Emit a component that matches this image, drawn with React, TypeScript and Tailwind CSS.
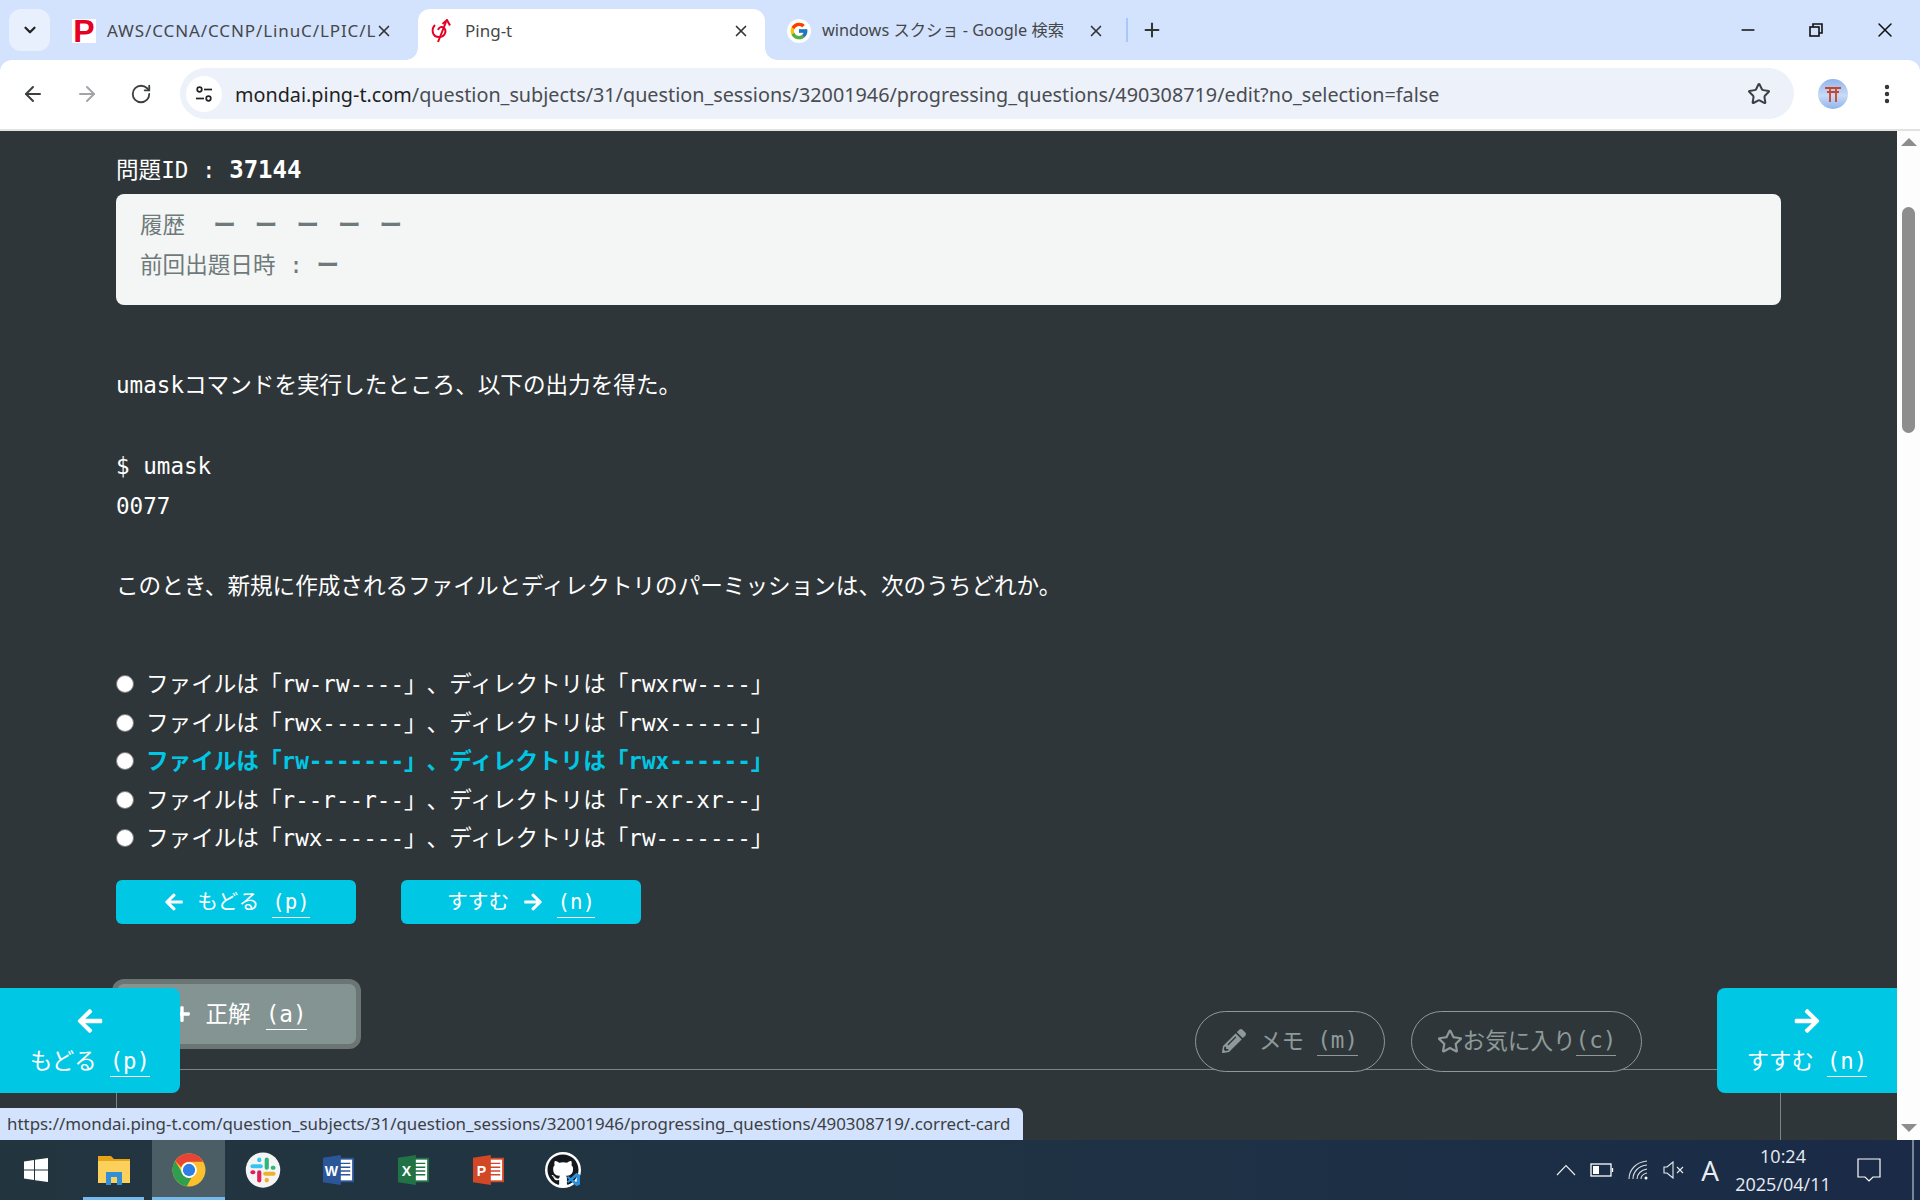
import * as React from 'react';
import { ArrowLeft, ArrowRight, RotateCw, Star, MoreVertical, Plus, X, ChevronDown, Minus } from 'lucide-react';
import { FaArrowLeft, FaArrowRight, FaPencilAlt, FaRegStar, FaPlus, FaGithub } from 'react-icons/fa';
import { FcGoogle } from 'react-icons/fc';
import { VscVscode } from 'react-icons/vsc';

const mono = { fontFamily: '"DejaVu Sans Mono", "Noto Sans CJK JP", monospace' };

const options = [
    { file: 'rw-rw----', dir: 'rwxrw----', correct: false },
    { file: 'rwx------', dir: 'rwx------', correct: false },
    { file: 'rw-------', dir: 'rwx------', correct: true },
    { file: 'r--r--r--', dir: 'r-xr-xr--', correct: false },
    { file: 'rwx------', dir: 'rw-------', correct: false },
];

const Key: React.FC<{ children: React.ReactNode; className?: string }> = ({ children, className = 'border-white' }) => (
    <span className={`border-b leading-[30px] inline-block ${className}`}>{children}</span>
);

const Tab: React.FC<{ icon: React.ReactNode; title: string; active?: boolean; width: string; titleClass: string; xPos: string }> = ({ icon, title, active, width, titleClass, xPos }) => (
    <div className={`relative h-[51px] flex items-center shrink-0 pb-[8px] ${width} ${active ? 'bg-white rounded-t-xl' : ''}`}>
        {active && <span className="absolute -left-3 bottom-0 w-3 h-3 bg-[radial-gradient(circle_at_0_0,#d3e3fd_11.5px,#ffffff_12px)]" />}
        {active && <span className="absolute -right-3 bottom-0 w-3 h-3 bg-[radial-gradient(circle_at_100%_0,#d3e3fd_11.5px,#ffffff_12px)]" />}
        <span className="ml-3 w-6 h-6 shrink-0 flex items-center justify-center">{icon}</span>
        <span className={`ml-[11px] whitespace-nowrap text-[#45474a] ${titleClass}`}>{title}</span>
        <X className={`absolute top-[13px] w-[18px] h-[18px] text-[#333] ${xPos}`} strokeWidth={2.2} />
    </div>
);

const PingIcon = () => (
    <svg viewBox="0 0 24 24" className="w-6 h-6" fill="none" stroke="#e60023" strokeWidth="2">
        <path d="M5 6C1 10 2 18 9 18C15 18 17 12 14 9C12 7 9 8 8 11" />
        <path d="M8 23L16 3" />
        <path d="M12.5 5L17 1L20 6.5" />
    </svg>
);

const ChromeIcon = () => (
    <svg viewBox="0 0 48 48" className="w-[36px] h-[36px]">
        <circle cx="24" cy="24" r="22" fill="#fbc02d" />
        <path d="M5.6 12L15 28a11 11 0 0 0 12 6.6L21 45.8A22 22 0 0 1 5.6 12z" fill="#2e9e4f" />
        <path d="M24 2a22 22 0 0 1 19.05 11H24a11 11 0 0 0-10.4 7.4L5.6 12A22 22 0 0 1 24 2z" fill="#e94335" />
        <circle cx="24" cy="24" r="10.5" fill="#fff" />
        <circle cx="24" cy="24" r="8.2" fill="#2d7ee6" />
    </svg>
);

const SlackIcon = () => (
    <svg viewBox="0 0 48 48" className="w-[36px] h-[38px]">
        <ellipse cx="24" cy="24" rx="23" ry="23.5" fill="#f4f4f4" />
        <g strokeWidth="5.5" strokeLinecap="round" fill="none">
            <path d="M29 10V21M29 21H29" stroke="#2eb67d" />
            <path d="M38 21H37" stroke="#2eb67d" />
            <path d="M27 29H38" stroke="#ecb22e" />
            <path d="M29 38V37" stroke="#ecb22e" />
            <path d="M19 27V38" stroke="#e01e5a" />
            <path d="M10 27H11" stroke="#e01e5a" />
            <path d="M10 19H21" stroke="#36c5f0" />
            <path d="M19 10V11" stroke="#36c5f0" />
        </g>
    </svg>
);

const OfficeIcon: React.FC<{ color: string; letter: string }> = ({ color, letter }) => (
    <svg viewBox="0 0 34 34" className="w-[32px] h-[32px]">
        <rect x="14" y="5" width="19" height="24" fill="#fff" stroke={color} strokeWidth="2" />
        <path d="M19 10H30M19 14H30M19 18H30M19 22H30" stroke={color} strokeWidth="1.5" />
        <path d="M1 4L20 1V33L1 30Z" fill={color} />
        <text x="10" y="23" textAnchor="middle" fontSize="15" fontWeight="700" fill="#fff" fontFamily="Liberation Sans, sans-serif">{letter}</text>
    </svg>
);

const TaskCell: React.FC<{ children: React.ReactNode; width: string; active?: boolean; open?: boolean }> = ({ children, width, active, open }) => (
    <div className={`relative h-full flex items-center justify-center ${width} ${active ? 'bg-[#4b5e66]' : ''}`}>
        {children}
        {open && <span className={`absolute bottom-0 h-[3px] bg-[#76b9ed] ${active ? 'inset-x-0' : 'inset-x-2'}`} />}
    </div>
);

const App: React.FC = () => {
    return (
        <div className="relative w-[1920px] h-[1200px] overflow-hidden flex flex-col bg-[#d3e3fd] [text-spacing-trim:space-all]" style={{ fontFamily: '"Noto Sans", "Noto Sans CJK JP", sans-serif' }}>
            {/* tab strip */}
            <div className="h-[60px] shrink-0 flex items-end pl-[9px]">
                <div className="self-start mt-[9px] w-[41px] h-[42px] rounded-xl bg-[#e9f0fd] flex items-center justify-center">
                    <ChevronDown className="w-[18px] h-[18px] text-[#222]" strokeWidth={3} />
                </div>
                <div className="ml-[10px] flex items-end">
                    <Tab
                        width="w-[358px]"
                        titleClass="text-[17px] tracking-[0.9px]"
                        xPos="right-[25px]"
                        title="AWS/CCNA/CCNP/LinuC/LPIC/L"
                        icon={<span className="w-6 h-6 bg-white flex items-center justify-center text-[#e60023] text-[32px] font-bold leading-none" style={{ fontFamily: '"Liberation Sans", sans-serif' }}>P</span>}
                    />
                    <Tab width="w-[347px]" titleClass="text-[17px]" xPos="right-[15px]" active title="Ping-t" icon={<PingIcon />} />
                    <div className="w-[10px]" />
                    <Tab
                        width="w-[353px]"
                        titleClass="text-[16.3px]"
                        xPos="right-[23px]"
                        title="windows スクショ - Google 検索"
                        icon={<span className="w-6 h-6 bg-white rounded-full flex items-center justify-center"><FcGoogle className="w-5 h-5" /></span>}
                    />
                </div>
                <span className="self-start mt-[18px] -ml-[2px] w-[2px] h-6 bg-[#a8c7fa]" />
                <Plus className="self-start mt-[19px] ml-[13px] w-[22px] h-[22px] text-[#333]" strokeWidth={2.2} />
                <div className="ml-auto self-start flex items-center h-[60px]">
                    <Minus className="w-5 h-5 text-[#111] mr-[50px]" strokeWidth={2} />
                    <svg viewBox="0 0 16 16" className="w-4 h-4 mr-[49px]" fill="none" stroke="#111" strokeWidth="1.6">
                        <rect x="2" y="5" width="9" height="9" />
                        <path d="M5 5V2H14V11H11" />
                    </svg>
                    <X className="w-6 h-6 text-[#111] mr-[23px]" strokeWidth={1.5} />
                </div>
            </div>

            {/* toolbar */}
            <div className="h-[71px] shrink-0 bg-white rounded-t-xl border-b-2 border-[#e2e2e2] flex items-center pb-[2px] pl-[21px]">
                <ArrowLeft className="w-6 h-6 text-[#3c4043]" strokeWidth={2} />
                <ArrowRight className="ml-[30px] w-6 h-6 text-[#a2a4a7]" strokeWidth={2} />
                <RotateCw className="ml-[31px] w-[22px] h-[22px] text-[#3c4043]" strokeWidth={2} />
                <div className="ml-[28px] w-[1614px] h-[51px] rounded-full bg-[#ecf1fa] flex items-center pl-[6px]">
                    <div className="w-9 h-9 rounded-full bg-white flex items-center justify-center shrink-0">
                        <svg viewBox="0 0 20 20" className="w-5 h-5" fill="none" stroke="#222" strokeWidth="1.7">
                            <circle cx="5.5" cy="5.5" r="2.3" />
                            <path d="M10 5.5H18" />
                            <circle cx="14.5" cy="14.5" r="2.3" />
                            <path d="M2 14.5H10" />
                        </svg>
                    </div>
                    <div className="ml-[13px] pt-[2px] text-[19.8px] whitespace-nowrap text-[#4a4c50]">
                        <span className="text-[#1f1f1f]">mondai.ping-t.com</span>/question_subjects/31/question_sessions/32001946/progressing_questions/490308719/edit?no_selection=false
                    </div>
                    <Star className="ml-auto mr-[23px] w-6 h-6 text-[#3c4043]" strokeWidth={2} />
                </div>
                <div className="ml-6 w-[30px] h-[30px] rounded-full bg-[linear-gradient(#8fb5ec,#c9daf6_55%,#8fb5ec)] flex items-center justify-center shrink-0">
                    <svg viewBox="0 0 20 20" className="w-5 h-5" fill="none" stroke="#c8452e" strokeWidth="1.8">
                        <path d="M2 4H18M4 8H16M7 4V18M13 4V18" />
                    </svg>
                </div>
                <MoreVertical className="ml-[27px] w-6 h-6 text-[#333]" strokeWidth={2.4} />
            </div>

            {/* page */}
            <div className="h-[1009px] shrink-0 flex">
                <main className="w-[1897px] h-full overflow-hidden bg-[#2f3639] text-white pl-[116px] pr-[116px] pt-[19px] text-[22.6px] leading-[40px]" style={mono}>
                    <div className="h-[40px]">問題ID : <span className="font-bold text-[24px]">37144</span></div>
                    <div className="mt-[4px] h-[111px] rounded-lg bg-[#f4f6f6] text-[#6e7a7a] px-6 pt-[11px]">
                        <div className="flex">
                            <span>履歴</span>
                            <span className="ml-[28px] flex gap-[19px] font-semibold">
                                <span>ー</span><span>ー</span><span>ー</span><span>ー</span><span>ー</span>
                            </span>
                        </div>
                        <div>前回出題日時 : <span className="font-semibold">ー</span></div>
                    </div>
                    <div className="mt-[60px] leading-[40.3px]">
                        <p>umaskコマンドを実行したところ、以下の出力を得た。</p>
                        <p className="mt-[40.3px]">$ umask</p>
                        <p>0077</p>
                        <p className="mt-[40.3px]">このとき、新規に作成されるファイルとディレクトリのパーミッションは、次のうちどれか。</p>
                    </div>
                    <div className="mt-[58px]">
                        {options.map((o, i) => (
                            <label key={i} className={`flex items-center h-[38.5px] whitespace-nowrap ${o.correct ? 'text-[#00c7e4] font-bold' : ''}`}>
                                <span className="w-[18px] h-[18px] rounded-full bg-white border border-[#777] shrink-0" />
                                <span className="ml-[12px]">ファイルは「{o.file}」、ディレクトリは「{o.dir}」</span>
                            </label>
                        ))}
                    </div>
                    <div className="mt-[23px] flex gap-[45px] text-[20.8px]">
                        <button className="w-[240px] h-[44px] rounded-md bg-[#00c7e4] flex items-center justify-center gap-[13px] pl-[2px]">
                            <FaArrowLeft className="w-5 h-5" />
                            <span>もどる</span>
                            <Key>(p)</Key>
                        </button>
                        <button className="w-[240px] h-[44px] rounded-md bg-[#00c7e4] flex items-center justify-center gap-[14px]">
                            <span>すすむ</span>
                            <FaArrowRight className="w-5 h-5" />
                            <Key>(n)</Key>
                        </button>
                    </div>
                    <div className="mt-[55px] -ml-1 pr-[139px] flex justify-between h-[93px]">
                        <button className="w-[249px] h-[70px] rounded-xl border-[5px] border-[#6b7574] bg-[#849493] flex items-center justify-center gap-[15px] pl-[6px]">
                            <FaPlus className="w-[18px] h-[18px]" />
                            <span>正解</span>
                            <Key>(a)</Key>
                        </button>
                        <div className="relative z-10 self-end flex gap-[26px] text-[#8d9a99]">
                            <button className="w-[190px] h-[61px] rounded-full border border-[#8d9a99] bg-[#2f3639] flex items-center justify-center gap-[13px] pb-[2px]">
                                <FaPencilAlt className="w-[24px] h-[24px]" />
                                <span>メモ</span>
                                <Key className="border-[#8d9a99]">(m)</Key>
                            </button>
                            <button className="w-[231px] h-[61px] rounded-full border border-[#8d9a99] bg-[#2f3639] flex items-center justify-center pb-[2px]">
                                <FaRegStar className="w-[26px] h-[26px]" />
                                <span>お気に入り</span>
                                <Key className="border-[#8d9a99]">(c)</Key>
                            </button>
                        </div>
                    </div>
                    <div className="-mt-[3px] h-[120px] border border-b-0 border-[#7c8584]" />
                </main>
                <div className="w-[23px] bg-[#fdfdfd] flex flex-col items-center relative">
                    <span className="mt-[7px] w-0 h-0 border-x-[8px] border-x-transparent border-b-[8px] border-b-[#8d8d8d]" />
                    <span className="mt-[61px] w-[13px] h-[226px] rounded-full bg-[#8d8d8d]" />
                    <span className="mt-auto mb-[8px] w-0 h-0 border-x-[8px] border-x-transparent border-t-[8px] border-t-[#8d8d8d]" />
                </div>
            </div>

            {/* taskbar */}
            <div className="h-[60px] shrink-0 flex items-center bg-[linear-gradient(90deg,#22353f,#1f3344_50%,#1a2a47)] text-white">
                <TaskCell width="w-[75px]">
                    <svg viewBox="0 0 24 24" className="w-6 h-6 ml-[-3px]" fill="#fff">
                        <path d="M0 3.5L10 2V11.5H0ZM11 1.8L24 0V11.5H11ZM0 12.5H10V22L0 20.5ZM11 12.5H24V24L11 22.2Z" />
                    </svg>
                </TaskCell>
                <TaskCell width="w-[77px]" open>
                    <svg viewBox="0 0 34 34" className="w-[34px] h-[34px]">
                        <path d="M1 3H14L17 6H33V30H1Z" fill="#e8a317" />
                        <path d="M1 8H33V30H1Z" fill="#fbd15b" />
                        <path d="M9 19H25V32H20V24H14V32H9Z" fill="#2f8fd8" />
                    </svg>
                </TaskCell>
                <TaskCell width="w-[73px]" active open><ChromeIcon /></TaskCell>
                <TaskCell width="w-[76px]"><SlackIcon /></TaskCell>
                <TaskCell width="w-[74px]"><OfficeIcon color="#2b579a" letter="W" /></TaskCell>
                <TaskCell width="w-[75px]"><OfficeIcon color="#217346" letter="X" /></TaskCell>
                <TaskCell width="w-[75px]"><OfficeIcon color="#d24726" letter="P" /></TaskCell>
                <TaskCell width="w-[75px]">
                    <div className="relative w-[36px] h-[36px] rounded-full bg-white flex items-center justify-center">
                        <FaGithub className="w-[32px] h-[32px] text-[#14181c]" />
                        <VscVscode className="absolute -right-[1px] bottom-0 w-4 h-4 text-[#2a8fdc]" />
                    </div>
                </TaskCell>

                <div className="ml-auto h-full flex items-center text-[#e8edf2]" style={{ fontFamily: '"Open Sans", "Noto Sans", sans-serif' }}>
                    <span className="w-9 flex justify-center">
                        <svg viewBox="0 0 20 12" className="w-5 h-3" fill="none" stroke="#e8edf2" strokeWidth="1.2">
                            <path d="M1 11L10 1.5L19 11" />
                        </svg>
                    </span>
                    <span className="w-9 flex justify-center">
                        <svg viewBox="0 0 24 14" className="w-6 h-[14px]" fill="none" stroke="#fff" strokeWidth="1.3">
                            <rect x="1" y="1" width="20" height="12" />
                            <rect x="3" y="3" width="6" height="8" fill="#fff" stroke="none" />
                            <path d="M22.5 5V9" />
                        </svg>
                    </span>
                    <span className="w-9 flex justify-center">
                        <svg viewBox="0 0 20 20" className="w-5 h-5" fill="none" stroke="#d7dde3" strokeWidth="1.1">
                            <path d="M1 19C1 10 8 2 19 1M5 19C5 12 10 6 19 5M9 19C9 14 13 10 19 9M13 19C13 16 15 14 19 13" />
                            <circle cx="18" cy="18" r="1.5" fill="#fff" stroke="none" />
                        </svg>
                    </span>
                    <span className="w-9 flex justify-center">
                        <svg viewBox="0 0 22 18" className="w-[22px] h-[18px]" fill="none" stroke="#e8edf2" strokeWidth="1.1">
                            <path d="M1 6H4L10 1V17L4 12H1Z" />
                            <path d="M14 6L20 12M20 6L14 12" />
                        </svg>
                    </span>
                    <span className="w-9 text-center text-[28px] leading-none">A</span>
                    <span className="w-[110px] text-center text-[18px] leading-[28px]">
                        <span className="block">10:24</span>
                        <span className="block">2025/04/11</span>
                    </span>
                    <span className="w-[62px] flex justify-center">
                        <svg viewBox="0 0 24 24" className="w-6 h-6" fill="none" stroke="#fff" strokeWidth="1.2">
                            <path d="M1 1H23V19H16L12 23L8 19H1Z" />
                        </svg>
                    </span>
                    <span className="ml-3 w-[2px] h-full bg-[#75879a]" />
                    <span className="w-[6px]" />
                </div>
            </div>

            {/* hover url bubble */}
            <div className="absolute left-0 top-[1108px] w-[1023px] h-[32px] bg-[#d3e3fd] rounded-tr-md pl-[7px] text-[16.9px] leading-[32px] text-[#3c4043] whitespace-nowrap">
                https://mondai.ping-t.com/question_subjects/31/question_sessions/32001946/progressing_questions/490308719/.correct-card
            </div>

            {/* fixed side buttons */}
            <button className="absolute left-0 top-[988px] w-[180px] h-[105px] rounded-r-lg bg-[#00c7e4] text-white text-[22.4px] flex flex-col items-center pt-[19px]" style={mono}>
                <FaArrowLeft className="w-7 h-7" />
                <span className="mt-[6px] flex items-center gap-[13px] leading-[40px]"><span>もどる</span><Key>(p)</Key></span>
            </button>
            <button className="absolute left-[1717px] top-[988px] w-[180px] h-[105px] rounded-l-lg bg-[#00c7e4] text-white text-[22.4px] flex flex-col items-center pt-[19px]" style={mono}>
                <FaArrowRight className="w-7 h-7" />
                <span className="mt-[6px] flex items-center gap-[13px] leading-[40px]"><span>すすむ</span><Key>(n)</Key></span>
            </button>
        </div>
    );
};

export default App;
